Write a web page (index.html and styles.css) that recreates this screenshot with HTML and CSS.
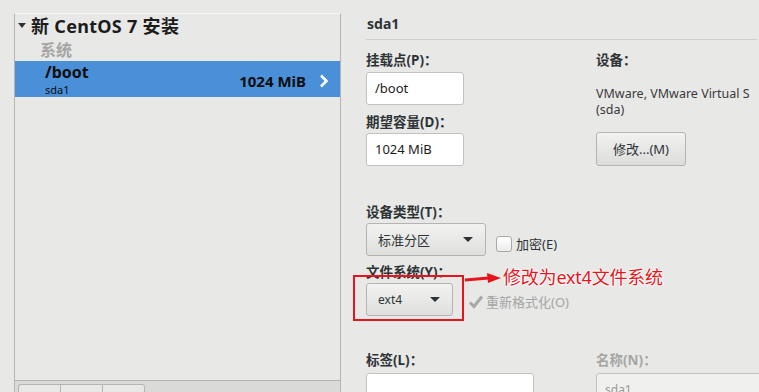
FILE: index.html
```html
<!DOCTYPE html>
<html lang="zh-CN">
<head>
<meta charset="UTF-8">
<title>手动分区</title>
<link rel="stylesheet" href="styles.css">
</head>
<body>
  <div class="page">
    <div class="left">
      <div class="tree-head"><span class="tri"></span>新 CentOS 7 安装</div>
      <div class="group">系统</div>
      <div class="row-sel">
        <div class="row-main">
          <div class="mount">/boot</div>
          <div class="dev">sda1</div>
        </div>
        <div class="size">1024 MiB</div>
        <svg class="chev" width="10" height="14" viewBox="0 0 10 14"><path d="M2 1.5 L7.5 7 L2 12.5" fill="none" stroke="#fff" stroke-width="2.6"/></svg>
      </div>
      <div class="fill"></div>
      <div class="toolbar">
        <span class="tb-btn"></span><span class="tb-btn"></span><span class="tb-btn"></span>
      </div>
    </div>

    <div class="right">
      <div class="title">sda1</div>
      <div class="form">
        <div class="col col-a">
          <div class="lbl l-mount">挂载点(P)：</div>
          <div class="entry e-mount">/boot</div>
          <div class="lbl l-size">期望容量(D)：</div>
          <div class="entry e-size">1024 MiB</div>
          <div class="lbl l-type">设备类型(T)：</div>
          <div class="combo-row">
            <div class="combo c-type">标准分区<span class="arrow"></span></div>
            <label class="check"><span class="box"></span>加密(E)</label>
          </div>
          <div class="lbl l-fs">文件系统(Y)：</div>
          <div class="combo-row">
            <div class="combo c-fs">ext4<span class="arrow"></span></div>
            <label class="check disabled"><span class="box checked"><svg width="16" height="16" viewBox="0 0 16 16"><path d="M2 8.5 L6 12.5 L14 2.5" fill="none" stroke="#a8a8a8" stroke-width="3"/></svg></span>重新格式化(O)</label>
          </div>
          <div class="lbl l-label">标签(L)：</div>
          <div class="entry e-label"></div>
        </div>
        <div class="col col-b">
          <div class="lbl l-mount">设备：</div>
          <div class="devtext">VMware, VMware Virtual S<br>(sda)</div>
          <div class="btn">修改...(M)</div>
          <div class="lbl gray l-name">名称(N)：</div>
          <div class="entry e-name">sda1</div>
        </div>
      </div>
    </div>

    <div class="note-box"></div>
    <svg class="note-arrow" width="40" height="14" viewBox="0 0 40 14"><path d="M0 8 L24 6" stroke="#e8141c" stroke-width="3"/><path d="M22 1 L36 6 L23 11 Z" fill="#e8141c"/></svg>
    <div class="note-text">修改为ext4文件系统</div>
  </div>
</body>
</html>
```
FILE: styles.css
```css
html, body {
  margin: 0;
  padding: 0;
}
body {
  background-color: #e8e8e7;
  font-family: "Noto Sans", "Noto Sans CJK SC", sans-serif;
  font-size: 13px;
  color: #2e3436;
}
.page {
  position: relative;
  display: flex;
  width: 759px;
  height: 392px;
  overflow: hidden;
}

/* left tree */
.left {
  flex: none;
  display: flex;
  flex-direction: column;
  margin: 13px 0 0 14px;
  width: 325px;
  border-left: 1px solid #b4b4b2;
  border-right: 1px solid #b4b4b2;
  border-top: 1px solid #f6f6f5;
}
.tree-head {
  display: flex;
  align-items: center;
  height: 22px;
  padding-left: 3px;
  font-size: 18px;
  font-weight: bold;
  letter-spacing: 0.3px;
  color: #1c1c1c;
}
.tri {
  width: 0;
  height: 0;
  border-left: 4px solid transparent;
  border-right: 4px solid transparent;
  border-top: 5px solid #2e3436;
  margin-right: 5px;
}
.group {
  height: 25px;
  line-height: 29px;
  padding-left: 25px;
  font-size: 16px;
  font-weight: bold;
  color: #a5a5a4;
}
.row-sel {
  display: flex;
  align-items: center;
  height: 36px;
  background-color: #4a90d9;
  color: #fff;
  padding: 0 11px 0 30px;
}
.row-main {
  flex: 1;
  align-self: flex-start;
}
.mount {
  font-size: 16px;
  font-weight: bold;
  line-height: 22px;
  color: #0d0d0d;
}
.dev {
  font-size: 11px;
  line-height: 14px;
  color: #0d0d0d;
}
.size {
  font-size: 15px;
  font-weight: bold;
  color: #0d0d0d;
  margin-top: 4px;
  margin-right: 13px;
}
.chev {
  margin-top: 3px;
}
.fill {
  flex: 1;
}
.toolbar {
  height: 8px;
  border-top: 1px solid #b4b4b2;
  background-color: #dadad9;
  padding: 3px 0 0 3px;
  display: flex;
}
.tb-btn {
  width: 41px;
  height: 12px;
  border: 1px solid #b4b4b2;
  border-right: none;
  background-color: #e8e8e7;
}
.tb-btn:first-child {
  border-radius: 3px 0 0 0;
}
.tb-btn:last-child {
  border-right: 1px solid #b4b4b2;
  border-radius: 0 3px 0 0;
}

/* right form */
.right {
  flex: 1;
  min-width: 0;
  padding-left: 25px;
}
.title {
  margin-top: 15px;
  height: 18px;
  line-height: 18px;
  font-size: 14px;
  font-weight: bold;
  color: #2e3436;
  border-bottom: 1px solid #cececd;
  padding: 0 0 6px 1px;
  width: 390px;
}
.form {
  display: flex;
}
.col {
  display: flex;
  flex-direction: column;
}
.col-a {
  flex: none;
  width: 230px;
}
.col-b {
  flex: none;
  width: 170px;
}
.lbl {
  height: 16px;
  line-height: 16px;
  font-size: 13.5px;
  font-weight: bold;
  color: #2e3436;
}
.lbl.gray {
  color: #a5a5a4;
}
.l-mount { margin-top: 12px; }
.l-size { margin-top: 9px; }
.l-type { margin-top: 38px; }
.l-fs { margin-top: 8px; }
.l-label { margin-top: 36px; }
.l-name { margin-top: 186px; }
.entry {
  box-sizing: border-box;
  height: 33px;
  background-color: #fff;
  border: 1px solid #c2c2c0;
  border-radius: 3px;
  padding: 0 8px;
  line-height: 31px;
  color: #1c1c1c;
}
.e-mount { width: 98px; margin-top: 4px; }
.e-size { width: 98px; margin-top: 3px; }
.e-label { width: 168px; margin-top: 5px; }
.e-name {
  width: 170px;
  margin-top: 5px;
  background-color: #f0f0ef;
  color: #9a9a99;
  font-size: 12px;
}
.combo-row {
  display: flex;
  align-items: center;
  margin-top: 3px;
}
.combo {
  box-sizing: border-box;
  display: flex;
  align-items: center;
  height: 33px;
  padding: 0 12px 0 11px;
  border: 1px solid #b4b4b2;
  border-radius: 3px;
  background: linear-gradient(#f2f2f1, #dfdfde);
  color: #2e3436;
}
.c-type { width: 120px; }
.c-fs { width: 87px; font-size: 12px; }
.arrow {
  margin-left: auto;
  width: 0;
  height: 0;
  border-left: 5px solid transparent;
  border-right: 5px solid transparent;
  border-top: 5px solid #2e3436;
}
.check {
  display: flex;
  align-items: center;
  margin-left: 10px;
  margin-top: 8px;
}
.box {
  box-sizing: border-box;
  width: 16px;
  height: 16px;
  border: 1px solid #a8a8a7;
  border-radius: 3px;
  background: linear-gradient(#ffffff, #ececeb);
  margin-right: 4px;
}
.box.checked {
  border: none;
  background: none;
  margin-right: 2px;
}
.check.disabled {
  color: #a5a5a4;
  margin-left: 15px;
  margin-top: 4px;
}
.devtext {
  margin-top: 18px;
  line-height: 16px;
  font-size: 12.5px;
  color: #3a3a3a;
  white-space: nowrap;
}
.btn {
  box-sizing: border-box;
  width: 90px;
  height: 34px;
  margin-top: 14px;
  line-height: 32px;
  text-align: center;
  border: 1px solid #b4b4b2;
  border-radius: 3px;
  background: linear-gradient(#f2f2f1, #dcdcdb);
  color: #2e3436;
}

/* red annotation */
.note-box {
  position: absolute;
  left: 353px;
  top: 275px;
  width: 107px;
  height: 42px;
  border: 2px solid #e8141c;
}
.note-arrow {
  position: absolute;
  left: 465px;
  top: 272px;
}
.note-text {
  position: absolute;
  left: 503px;
  top: 264px;
  font-size: 18px;
  line-height: 26px;
  color: #e8141c;
  text-shadow: 1px 0 0 #fff, -1px 0 0 #fff, 0 1px 0 #fff, 0 -1px 0 #fff;
  letter-spacing: -0.2px;
}
```
